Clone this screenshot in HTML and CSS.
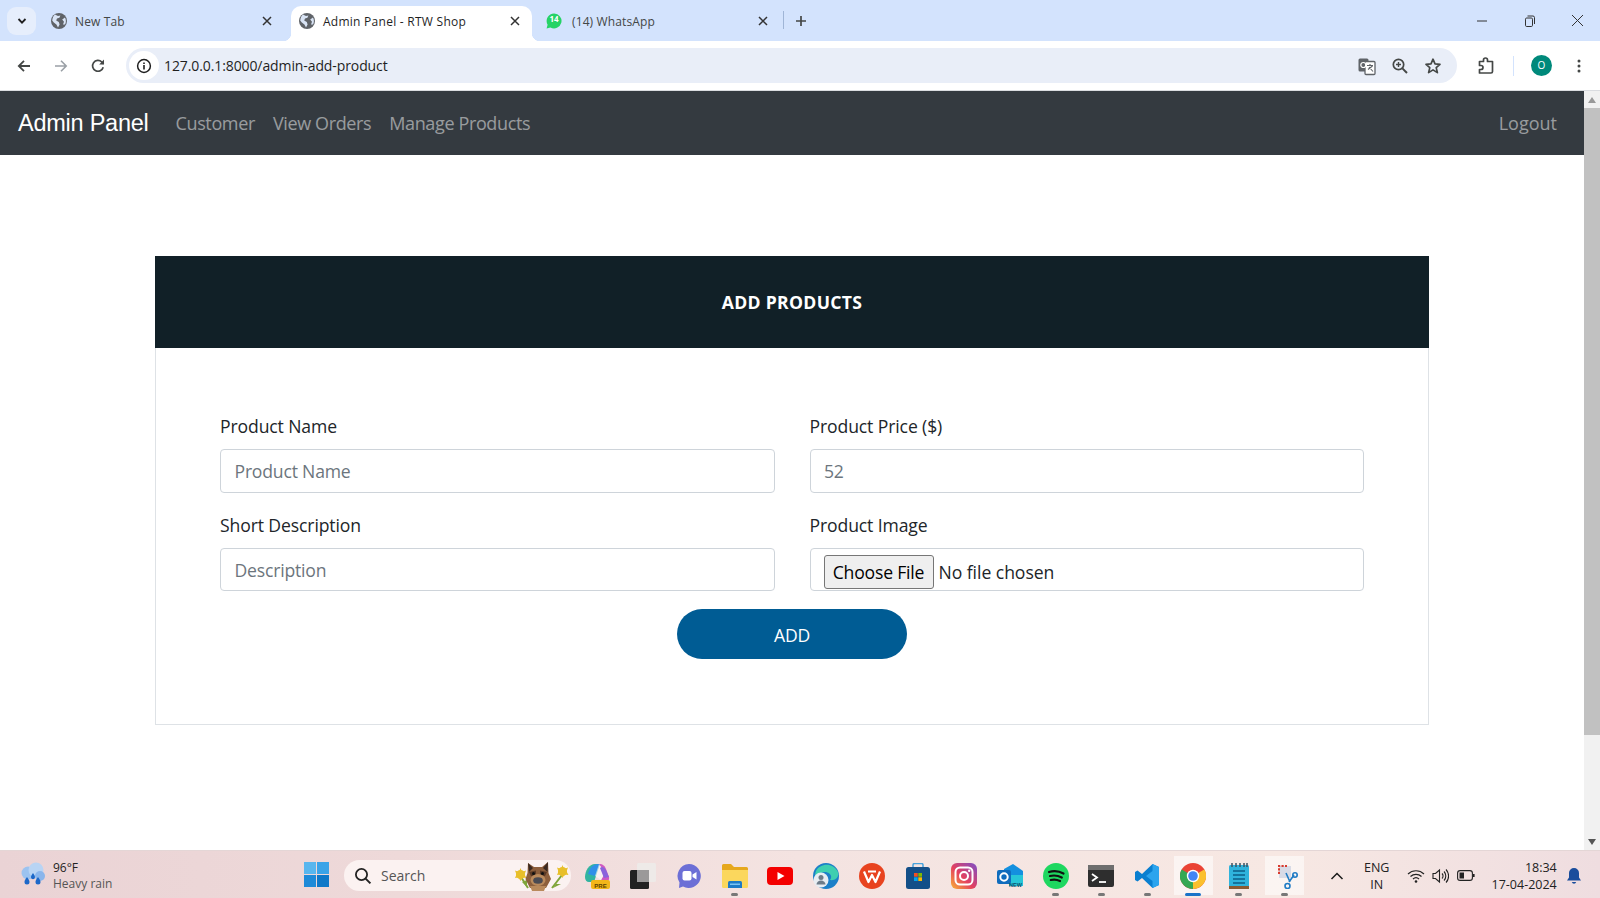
FILE: index.html
```html
<!DOCTYPE html>
<html lang="en">
<head>
<meta charset="utf-8">
<title>Admin Panel - RTW Shop</title>
<link rel="stylesheet" href="styles.css">
</head>
<body>
<svg class="sprite" aria-hidden="true">
  <symbol id="globe" viewBox="0 0 16 16"><circle cx="8" cy="8" r="8" fill="#5f6368"/><path d="M4 1.6 7 3 9.4 2.6 8.4 4.8 6 5.6 5.2 7.6 7.8 9 8.6 11.4 7 14.6 5.4 11.6 2.8 9.4 1.2 7.4C1.6 4.8 2.6 2.8 4 1.6ZM14 4.4 11.2 6.6 13 8.8 12 11.4 14 11.6C15.2 9.4 15.2 6.6 14 4.4Z" fill="#d9e4f5"/></symbol>
  <symbol id="close" viewBox="0 0 12 12"><path d="M2 2 10 10M10 2 2 10" stroke="currentColor" stroke-width="1.5" fill="none"/></symbol>
</svg>
<div class="app">
  <header class="tabstrip">
    <button class="tab-menu" aria-label="Search tabs"><svg width="12" height="12" viewBox="0 0 12 12"><path d="M2.5 4 6 7.6 9.5 4" stroke="#1f1f1f" stroke-width="1.8" fill="none"/></svg></button>
    <div class="tab tab-first">
      <svg class="tab-icon" width="16" height="16"><use href="#globe"/></svg>
      <span class="tab-title">New Tab</span>
      <svg class="tab-close" width="12" height="12"><use href="#close"/></svg>
    </div>
    <div class="tab tab-active">
      <svg class="tab-icon" width="16" height="16"><use href="#globe"/></svg>
      <span class="tab-title">Admin Panel - RTW Shop</span>
      <svg class="tab-close" width="12" height="12"><use href="#close"/></svg>
    </div>
    <div class="tab tab-last">
      <svg class="tab-icon" width="16" height="16" viewBox="0 0 16 16"><path d="M8 .6A7.4 7.4 0 0 0 1.6 11.7L.6 15.4 4.4 14.4A7.4 7.4 0 1 0 8 .6Z" fill="#25d366"/></svg>
      <span class="tab-badge">14</span>
      <span class="tab-title">(14) WhatsApp</span>
      <svg class="tab-close" width="12" height="12"><use href="#close"/></svg>
    </div>
    <span class="tab-sep"></span>
    <svg class="tab-new" width="14" height="14" viewBox="0 0 14 14"><path d="M7 2V12M2 7H12" stroke="#444746" stroke-width="1.7"/></svg>
    <div class="win-controls">
      <svg width="12" height="12" viewBox="0 0 12 12"><path d="M1 6H11" stroke="#333" stroke-width="1"/></svg>
      <svg width="12" height="12" viewBox="0 0 12 12"><rect x="1.5" y="3" width="7" height="8.5" rx="1.2" fill="none" stroke="#333"/><path d="M3.5 1H9A1.6 1.6 0 0 1 10.5 2.6V9" fill="none" stroke="#333"/></svg>
      <svg width="13" height="13" viewBox="0 0 13 13"><path d="M1 1 12 12M12 1 1 12" stroke="#333" stroke-width="1"/></svg>
    </div>
  </header>

  <div class="toolbar">
    <button class="nav-btn" aria-label="Back"><svg width="16" height="16" viewBox="0 0 16 16"><path d="M14 8H3M8 2.8 2.8 8 8 13.2" stroke="#444746" stroke-width="1.8" fill="none"/></svg></button>
    <button class="nav-btn" aria-label="Forward"><svg width="16" height="16" viewBox="0 0 16 16"><path d="M2 8H13M8 2.8 13.2 8 8 13.2" stroke="#9aa0a6" stroke-width="1.6" fill="none"/></svg></button>
    <button class="nav-btn" aria-label="Reload"><svg width="16" height="16" viewBox="0 0 16 16"><path d="M13.2 9.2A5.4 5.4 0 1 1 11.8 4L13.6 5.8" stroke="#444746" stroke-width="1.7" fill="none"/><path d="M14 1.6V6.4H9.2Z" fill="#444746"/></svg></button>
    <div class="omnibox">
      <span class="site-info"><svg width="16" height="16" viewBox="0 0 16 16"><circle cx="8" cy="8" r="6.4" fill="none" stroke="#1f1f1f" stroke-width="1.5"/><path d="M8 7V11.4M8 4.4V6" stroke="#1f1f1f" stroke-width="1.6"/></svg></span>
      <span class="url">127.0.0.1:8000/admin-add-product</span>
      <span class="omni-action"><svg width="20" height="20" viewBox="0 0 20 20"><rect x="1.5" y="2.5" width="10" height="13" rx="1.5" fill="#5f6368"/><rect x="8" y="5.5" width="10" height="13" rx="1" fill="#fff" stroke="#5f6368" stroke-width="1.3"/><path d="M10 9.5H16M13 8V10M11 13.5 15.5 10M12 11 16 15.5" stroke="#5f6368" stroke-width="1.1" fill="none"/><circle cx="6.3" cy="9" r="2.5" fill="none" stroke="#fff" stroke-width="1.2"/></svg></span>
      <span class="omni-action"><svg width="18" height="18" viewBox="0 0 18 18"><circle cx="7.5" cy="7.5" r="5.2" fill="none" stroke="#444746" stroke-width="1.7"/><path d="M11.4 11.4 16 16" stroke="#444746" stroke-width="2"/><path d="M7.5 5V10M5 7.5H10" stroke="#444746" stroke-width="1.4"/></svg></span>
      <span class="omni-action"><svg width="18" height="18" viewBox="0 0 18 18"><path d="M9 2.2 11 6.9 16 7.3 12.2 10.6 13.4 15.6 9 12.9 4.6 15.6 5.8 10.6 2 7.3 7 6.9Z" fill="none" stroke="#444746" stroke-width="1.7" stroke-linejoin="round"/></svg></span>
    </div>
    <div class="toolbar-right">
      <span class="ext"><svg width="20" height="20" viewBox="0 0 20 20"><path d="M3.5 5.5H7.5V4A2 2 0 0 1 11.5 4V5.5H16.5V15.5A1.5 1.5 0 0 1 15 17H3.5V13.5H5A2 2 0 0 0 5 9.5H3.5Z" fill="none" stroke="#444746" stroke-width="1.7" stroke-linejoin="round"/></svg></span>
      <span class="toolbar-sep"></span>
      <span class="avatar">O</span>
      <span class="dots"><svg width="16" height="16" viewBox="0 0 16 16"><circle cx="8" cy="3" r="1.5" fill="#444746"/><circle cx="8" cy="8" r="1.5" fill="#444746"/><circle cx="8" cy="13" r="1.5" fill="#444746"/></svg></span>
    </div>
  </div>

  <div class="viewport">
    <main class="page">
      <nav class="navbar">
        <a class="brand">Admin Panel</a>
        <a class="nav-link">Customer</a>
        <a class="nav-link">View Orders</a>
        <a class="nav-link">Manage Products</a>
        <a class="nav-link nav-logout">Logout</a>
      </nav>
      <section class="card">
        <h1 class="card-head">ADD PRODUCTS</h1>
        <form class="card-body">
          <div class="form-grid">
            <div class="field">
              <label class="field-label">Product Name</label>
              <input class="field-input" type="text" placeholder="Product Name">
            </div>
            <div class="field">
              <label class="field-label">Product Price ($)</label>
              <input class="field-input" type="text" placeholder="52">
            </div>
            <div class="field">
              <label class="field-label">Short Description</label>
              <input class="field-input field-short" type="text" placeholder="Description">
            </div>
            <div class="field">
              <label class="field-label">Product Image</label>
              <input class="field-input field-short field-file" type="file">
            </div>
          </div>
          <button class="add-btn" type="button">ADD</button>
        </form>
      </section>
    </main>
    <aside class="scrollbar">
      <span class="sb-btn"><svg width="8" height="6" viewBox="0 0 8 6"><path d="M4 0 8 6H0Z" fill="#999"/></svg></span>
      <span class="sb-thumb"></span>
      <span class="sb-btn sb-down"><svg width="8" height="6" viewBox="0 0 8 6"><path d="M4 6 8 0H0Z" fill="#555"/></svg></span>
    </aside>
  </div>

  <footer class="taskbar">
    <div class="weather">
      <svg width="27" height="26" viewBox="0 0 27 26"><circle cx="9" cy="11" r="6.5" fill="#9cc3f0"/><circle cx="17" cy="8" r="7.5" fill="#b8d4f4"/><circle cx="21" cy="14" r="5" fill="#8ab6ec"/><path d="M8 15C9.5 17 10.5 18.5 10.5 20A2.5 2.5 0 0 1 5.5 20C5.5 18.5 6.5 17 8 15ZM14 11C15.2 12.8 16 14 16 15.2A2 2 0 0 1 12 15.2C12 14 12.8 12.8 14 11ZM19 15C20.5 17 21.5 18.5 21.5 20A2.5 2.5 0 0 1 16.5 20C16.5 18.5 17.5 17 19 15Z" fill="#1c68c9"/></svg>
      <div class="weather-text"><span class="weather-temp">96°F</span><span class="weather-desc">Heavy rain</span></div>
    </div>
    <svg class="win-logo" width="25" height="25" viewBox="0 0 25 25"><rect width="12" height="12" fill="#58b6ee"/><rect x="13" width="12" height="12" fill="#3aa3e8"/><rect y="13" width="12" height="12" fill="#1e8ad8"/><rect x="13" y="13" width="12" height="12" fill="#0f78c8"/></svg>
    <div class="search">
      <svg width="18" height="18" viewBox="0 0 18 18"><circle cx="7.5" cy="7.5" r="5.6" fill="none" stroke="#222" stroke-width="1.8"/><path d="M11.6 11.6 16.4 16.4" stroke="#222" stroke-width="2"/></svg>
      <span class="search-text">Search</span>
      <svg class="search-art" width="56" height="31" viewBox="0 0 56 31"><path d="M6 17 13 28M47 15 37 28" stroke="#7fa53a" stroke-width="2" fill="none"/><path d="M7 22 12 20 12 27ZM41 24 46 24 38 28Z" fill="#7fa53a"/><g fill="#e8bf2a"><circle cx="5.500" cy="14.500" r="4.500"/><circle cx="47.500" cy="11.500" r="4.500"/></g><path d="M5.500 8 7 12 11 10.500 9.500 14.500 11.500 18 7.500 17.500 5.500 21 3.500 17.500 0 18 1.500 14.500 0 10.500 4 12ZM47.500 5 49 9 53 7.500 51.500 11.500 53.500 15 49.500 14.500 47.500 18 45.500 14.500 42 15 43.500 11.500 42 7.500 46 9Z" fill="#e8bf2a"/><path d="M13 3 19 7H27L33 2 33.500 13 36 19 31 28H15L10.500 19 12.500 13Z" fill="#8d5f3c"/><path d="M13 3 18 8 14 12ZM33 2 28 8 32.500 12Z" fill="#3a2a22"/><path d="M14 12 21 10.500 21 16 16 16ZM25 10.500 32 12 30 16 25 16Z" fill="#5b3a25"/><ellipse cx="23" cy="20" rx="7.500" ry="6" fill="#b98a5c"/><ellipse cx="23" cy="20.500" rx="4.800" ry="3.300" fill="#4a4a52"/><circle cx="18.500" cy="13.500" r="1.500" fill="#111"/><circle cx="27.500" cy="13.500" r="1.500" fill="#111"/><path d="M15 26H31L29 31H17Z" fill="#b98a5c"/></svg>
    </div>
    <div class="apps">
      <div class="app-slot">
        <svg class="app-icon" viewBox="0 0 26 26"><path d="M1 14C1 8 5 1 11 1H16L10 19H5C2.500 19 1 17 1 14Z" fill="#31b4a0"/><path d="M6 6C8 2 12 1 16 1L11 13 4 11Z" fill="#2f8fe8"/><path d="M15 1C19 1 21 3 22 6L25 14C25.500 17 24 19 21 19H16L21 10Z" fill="#d05ac0"/><path d="M15 1 21 10 17 17 11 13Z" fill="#fff" opacity=".55"/><path d="M16 5C18 3 20 4 22 7L25 14 20 15Z" fill="#8a63dc"/><rect x="7" y="17" width="19" height="9" rx="2" fill="#f2b619"/><text class="pre-label" x="16.500" y="24.500" text-anchor="middle">PRE</text></svg>
        <span class="app-dot app-dot-none"></span>
      </div>
      <div class="app-slot">
        <svg class="app-icon" viewBox="0 0 26 26"><rect x="7" y="0" width="19" height="19" rx="1.500" fill="#eeeae8"/><rect x="0" y="7" width="19" height="19" rx="1.500" fill="#222"/><rect x="7" y="7" width="12" height="12" fill="#9b9999"/></svg>
        <span class="app-dot app-dot-none"></span>
      </div>
      <div class="app-slot">
        <svg class="app-icon" viewBox="0 0 26 26"><path d="M13 1A12 12 0 1 1 7 23.500L3 25 3.500 19.500A12 12 0 0 1 13 1Z" fill="#6c6fd6"/><rect x="6.500" y="8" width="9" height="9.500" rx="2" fill="#fff"/><path d="M16.500 11.500 20.500 9V16.500L16.500 14Z" fill="#fff"/></svg>
        <span class="app-dot app-dot-none"></span>
      </div>
      <div class="app-slot">
        <svg class="app-icon" viewBox="0 0 26 26"><path d="M0 2.500A1.500 1.500 0 0 1 1.500 1H9L12 4H24.500A1.500 1.500 0 0 1 26 5.500V12H0Z" fill="#e6a81d"/><path d="M0 7H26V23.500A1.500 1.500 0 0 1 24.500 25H1.500A1.500 1.500 0 0 1 0 23.500Z" fill="#fbd75d"/><path d="M6 19.500A1.500 1.500 0 0 1 7.500 18H18.500A1.500 1.500 0 0 1 20 19.500V25H6Z" fill="#1e7ac6"/><rect x="8" y="20.500" width="10" height="1.500" fill="#7cc3f3"/></svg>
        <span class="app-dot"></span>
      </div>
      <div class="app-slot">
        <svg class="app-icon" viewBox="0 0 26 26"><rect y="4" width="26" height="18" rx="4" fill="#f40000"/><path d="M10.500 9 17.500 13 10.500 17Z" fill="#fff"/></svg>
        <span class="app-dot app-dot-none"></span>
      </div>
      <div class="app-slot">
        <svg class="app-icon" viewBox="0 0 26 26"><circle cx="13" cy="13" r="13" fill="#1c7fc8"/><path d="M3 8C7 0 20-1 25 9 26.500 14 22 18 17 17 21 12 14 7 8 10 5 11.500 3 14 2.500 16 2 13 2 10 3 8Z" fill="#3fcfb0"/><circle cx="8" cy="17" r="7.500" fill="#e8edf2"/><circle cx="8" cy="14.500" r="2.500" fill="#6d7b88"/><path d="M3.500 21.500A4.500 4 0 0 1 12.500 21.500Z" fill="#6d7b88"/></svg>
        <span class="app-dot app-dot-none"></span>
      </div>
      <div class="app-slot">
        <svg class="app-icon" viewBox="0 0 26 26"><circle cx="13" cy="13" r="13" fill="#e8431f"/><path d="M5 8.500 9.500 19 13 12 16.500 19 21 8.500M9 8.500H17" fill="none" stroke="#fff" stroke-width="2.200" stroke-linejoin="round"/></svg>
        <span class="app-dot app-dot-none"></span>
      </div>
      <div class="app-slot">
        <svg class="app-icon" viewBox="0 0 26 26"><path d="M8 5V2A1.500 1.500 0 0 1 9.500 .5H16.500A1.500 1.500 0 0 1 18 2V5" fill="none" stroke="#47a2dc" stroke-width="1.500"/><rect x="1" y="4" width="24" height="22" rx="2.500" fill="#134f88"/><rect x="9" y="10" width="3.700" height="3.700" fill="#f25022"/><rect x="13.300" y="10" width="3.700" height="3.700" fill="#7fba00"/><rect x="9" y="14.300" width="3.700" height="3.700" fill="#00a4ef"/><rect x="13.300" y="14.300" width="3.700" height="3.700" fill="#ffb900"/></svg>
        <span class="app-dot app-dot-none"></span>
      </div>
      <div class="app-slot">
        <svg class="app-icon" viewBox="0 0 26 26"><defs><linearGradient id="ig" x1="0" y1="1" x2="1" y2="0"><stop offset="0" stop-color="#f9b233"/><stop offset=".45" stop-color="#e4405f"/><stop offset="1" stop-color="#7b4fc9"/></linearGradient></defs><rect width="26" height="26" rx="6" fill="url(#ig)"/><rect x="4.500" y="4.500" width="17" height="17" rx="4.500" fill="none" stroke="#fff" stroke-width="2"/><circle cx="13" cy="13" r="4" fill="none" stroke="#fff" stroke-width="2"/><circle cx="18.200" cy="7.800" r="1.200" fill="#fff"/></svg>
        <span class="app-dot app-dot-none"></span>
      </div>
      <div class="app-slot">
        <svg class="app-icon" viewBox="0 0 26 26"><path d="M7 6 16 1 26 8V14H7Z" fill="#1490df"/><path d="M12 12H26V23H12Z" fill="#27c6d8"/><rect y="7" width="14" height="14" rx="2" fill="#0f6cbd"/><circle cx="7" cy="14" r="3.700" fill="none" stroke="#fff" stroke-width="2"/><text class="new-label" x="18.500" y="23.500" text-anchor="middle">NEW</text></svg>
        <span class="app-dot app-dot-none"></span>
      </div>
      <div class="app-slot">
        <svg class="app-icon" viewBox="0 0 26 26"><circle cx="13" cy="13" r="13" fill="#1ed760"/><path d="M6 9C11 7.500 16 8 20.500 10.500M7 13C11 12 15 12.500 18.800 14.500M7.800 17C11 16.200 14 16.500 17 18" stroke="#111" stroke-width="2.200" fill="none" stroke-linecap="round"/></svg>
        <span class="app-dot"></span>
      </div>
      <div class="app-slot">
        <svg class="app-icon" viewBox="0 0 26 26"><rect y="2" width="26" height="22" rx="2" fill="#2e2e2e"/><rect y="2" width="26" height="5" fill="#6e6e6e"/><path d="M4 11 9 14.500 4 18" stroke="#fff" stroke-width="1.800" fill="none"/><path d="M11 19H18" stroke="#fff" stroke-width="1.800"/></svg>
        <span class="app-dot"></span>
      </div>
      <div class="app-slot">
        <svg class="app-icon" viewBox="0 0 26 26"><path d="M18.500 1 25 4V22L18.500 25 8 15 3.500 18.500 1 17V9L3.500 7.500 8 11Z" fill="#0a7fd0"/><path d="M18.500 1 25 4V22L18.500 25V18L12 13 18.500 8Z" fill="#2ba4ee"/></svg>
        <span class="app-dot"></span>
      </div>
      <div class="app-slot app-slot-open">
        <svg class="app-icon" viewBox="0 0 26 26"><circle cx="13" cy="13" r="13" fill="#ea4335"/><path d="M13 13 24.300 6.500A13 13 0 0 1 13 26Z" fill="#fbc02d"/><path d="M13 13 13 26A13 13 0 0 1 1.700 6.500Z" fill="#34a853"/><circle cx="13" cy="13" r="6.200" fill="#fff"/><circle cx="13" cy="13" r="4.800" fill="#4285f4"/></svg>
        <span class="app-dot app-dot-active"></span>
      </div>
      <div class="app-slot">
        <svg class="app-icon" viewBox="0 0 26 26"><rect x="3" y="2" width="20" height="22" rx="1.500" fill="#2fb3dc"/><rect x="3" y="23" width="20" height="3" fill="#8a5a33"/><path d="M7 8H19M7 12H19M7 16H19M7 20H19" stroke="#0d5f86" stroke-width="1.500"/><path d="M6 0V4M10 0V4M14 0V4M18 0V4M21 0V4" stroke="#3c5161" stroke-width="1.500"/></svg>
        <span class="app-dot"></span>
      </div>
      <div class="app-slot app-slot-open">
        <svg class="app-icon" viewBox="0 0 26 26"><rect x="7" y="3" width="12" height="12" fill="#d8dbe6"/><path d="M7 11V3H15" fill="none" stroke="#d83b2f" stroke-width="2" stroke-dasharray="2.200 1.300"/><path d="M14 10 18 19M22 12 17 19" stroke="#1f7bc4" stroke-width="1.600"/><circle cx="15.500" cy="23" r="2.500" fill="none" stroke="#1f7bc4" stroke-width="1.600"/><circle cx="23" cy="12" r="2.200" fill="none" stroke="#1f7bc4" stroke-width="1.600"/></svg>
        <span class="app-dot"></span>
      </div>
    </div>
    <div class="tray">
      <svg class="tray-chevron" width="14" height="10" viewBox="0 0 14 10"><path d="M1.500 8 7 2.500 12.500 8" stroke="#1b1b1b" stroke-width="1.500" fill="none"/></svg>
      <div class="tray-lang"><span>ENG</span><span>IN</span></div>
      <svg class="tray-wifi" width="18" height="16" viewBox="0 0 18 16"><path d="M1 6A11.500 11.500 0 0 1 17 6M3.500 8.500A8 8 0 0 1 14.500 8.500M6 11A4.400 4.400 0 0 1 12 11" stroke="#222" stroke-width="1.200" fill="none"/><circle cx="9" cy="13.500" r="1.300" fill="#222"/></svg>
      <svg class="tray-sound" width="17" height="16" viewBox="0 0 17 16"><path d="M1 5.500H3.500L7.500 2V14L3.500 10.500H1Z" fill="none" stroke="#222" stroke-width="1.100"/><path d="M10 5.500A3.500 3.500 0 0 1 10 10.500M12 3.500A6.500 6.500 0 0 1 12 12.500M14 1.500A9.500 9.500 0 0 1 14 14.500" stroke="#222" stroke-width="1.100" fill="none"/></svg>
      <svg class="tray-battery" width="18" height="11" viewBox="0 0 18 11"><rect x=".6" y=".6" width="14.800" height="9.800" rx="2.500" fill="none" stroke="#222" stroke-width="1.100"/><rect x="2.500" y="2.500" width="4.500" height="6" fill="#222"/><rect x="16" y="4" width="1.600" height="3" fill="#222"/></svg>
      <div class="tray-clock"><span>18:34</span><span>17-04-2024</span></div>
      <svg class="tray-bell" width="16" height="18" viewBox="0 0 16 18"><path d="M8 1A5 5 0 0 0 3 6V10.500L1 13.500H15L13 10.500V6A5 5 0 0 0 8 1Z" fill="#1a4d9c"/><path d="M5.800 15A2.300 2.300 0 0 0 10.200 15Z" fill="#1a4d9c"/></svg>
    </div>
  </footer>
</div>
</body>
</html>
```
FILE: styles.css
```css
* { box-sizing: border-box; }
html, body { margin: 0; height: 100%; overflow: hidden; }
body { font-family: "Open Sans", "Noto Sans", "Liberation Sans", sans-serif; color: #212529; background: #fff; }
.sprite { display: none; }
.app { display: flex; flex-direction: column; width: 1600px; height: 898px; }

/* browser tabs */
.tabstrip { height: 41px; background: #d3e3fd; display: flex; align-items: flex-end; padding-left: 7px; flex: none; color: #444746; font-size: 12px; }
.tab-menu { width: 29px; height: 28px; margin-bottom: 6px; border: 0; border-radius: 9px; background: #e6eefc; display: flex; align-items: center; justify-content: center; padding: 0; }
.tab { position: relative; height: 35px; display: flex; align-items: center; padding-bottom: 5px; }
.tab-first { width: 255px; padding-left: 15px; padding-right: 18px; }
.tab-active { width: 241px; padding-left: 8px; padding-right: 11px; background: #fff; border-radius: 10px 10px 0 0; color: #1f1f1f; }
.tab-active::before, .tab-active::after { content: ""; position: absolute; bottom: 0; width: 8px; height: 8px; }
.tab-active::before { left: -8px; background: radial-gradient(circle at 0 0, #d3e3fd 8px, #fff 8.5px); }
.tab-active::after { right: -8px; background: radial-gradient(circle at 100% 0, #d3e3fd 8px, #fff 8.5px); }
.tab-last { width: 243px; padding-left: 14px; padding-right: 6px; }
.tab-icon { flex: none; margin-right: 8px; }
.tab-last .tab-icon { margin-right: 10px; }
.tab-title { flex: 1; white-space: nowrap; letter-spacing: .12px; }
.tab-active .tab-title { letter-spacing: .26px; }
.tab-close { flex: none; color: #333; }
.tab-badge { position: absolute; left: 14px; top: 5px; width: 16px; text-align: center; font-size: 8px; font-weight: 700; line-height: 15px; color: #fff; }
.tab-sep { width: 1px; height: 18px; background: #9fb5d6; margin: 0 0 12px 8px; }
.tab-new { margin: 0 0 13px 10px; }
.win-controls { margin-left: auto; height: 41px; width: 124px; padding: 0 16px 0 0; display: flex; align-items: center; justify-content: space-between; }

/* browser toolbar */
.toolbar { height: 49px; background: #fff; border-radius: 8px 8px 0 0; margin-top: 0; padding: 7px 0 7px 5px; display: flex; align-items: center; flex: none; }
.nav-btn { width: 37px; height: 35px; border: 0; padding: 0; background: none; display: flex; align-items: center; justify-content: center; }
.omnibox { flex: 1; height: 35px; margin-left: 10px; background: #e9eef8; border-radius: 18px; display: flex; align-items: center; padding: 0 8px 0 3px; }
.site-info { width: 30px; height: 29px; border-radius: 15px; background: #fff; display: flex; align-items: center; justify-content: center; flex: none; }
.url { flex: 1; margin-left: 5px; font-size: 14px; color: #1f1f1f; letter-spacing: -.1px; white-space: nowrap; }
.omni-action { width: 33px; display: flex; align-items: center; justify-content: center; }
.toolbar-right { width: 143px; flex: none; display: flex; align-items: center; padding-left: 12px; }
.ext { width: 34px; display: flex; justify-content: center; }
.toolbar-sep { width: 1px; height: 20px; background: #d3e3fd; margin-left: 10px; }
.avatar { width: 21px; height: 21px; margin-left: 17px; border-radius: 50%; background: #00897b; color: #fff; font-size: 10px; line-height: 21px; text-align: center; }
.dots { width: 16px; margin-left: 19px; display: flex; }

/* page */
.viewport { flex: 1; display: flex; min-height: 0; border-top: 1px solid #dadce0; }
.page { flex: 1; min-width: 0; }
.scrollbar { width: 16px; flex: none; background: #f1f1f1; display: flex; flex-direction: column; }
.sb-btn { height: 17px; display: flex; align-items: center; justify-content: center; flex: none; }
.sb-thumb { height: 627px; background: #c1c1c1; flex: none; }
.sb-down { margin-top: auto; }

.navbar { height: 64px; background: #343a40; display: flex; align-items: center; padding: 0 27px 0 18px; }
.brand { font-family: "Liberation Sans", Arial, sans-serif; font-size: 23.5px; color: #fff; margin-right: 18px; letter-spacing: -.25px; }
.nav-link { font-size: 18px; color: rgba(255, 255, 255, .5); padding: 0 9px; letter-spacing: -.37px; }
.nav-logout { margin-left: auto; padding: 0; letter-spacing: 0; }

.card { width: 1274px; margin: 101px auto 0; }
.card-head { height: 92px; margin: 0; background: #112027; color: #fff; display: flex; align-items: center; justify-content: center; font-size: 17.600px; font-weight: 700; letter-spacing: .3px; }
.card-body { border: 1px solid #dee2e6; border-top: 0; padding: 65px 64px 65px; display: flex; flex-direction: column; align-items: center; }
.form-grid { width: 100%; display: grid; grid-template-columns: 1fr 1fr; column-gap: 35px; row-gap: 19px; }
.field { display: flex; flex-direction: column; }
.field-label { font-size: 17.600px; line-height: 26px; margin-bottom: 10px; letter-spacing: -.12px; color: #212529; }
.field-input { width: 100%; height: 44px; border: 1px solid #ced4da; border-radius: 4px; padding: 0 14px 0 13.500px; font: inherit; font-size: 17.600px; color: #495057; background: #fff; letter-spacing: -.2px; }
.field-input::placeholder { color: #6c757d; opacity: 1; }
.field-short { height: 43px; }
.field-file { padding: 6px 14px 0 13px; color: #212529; letter-spacing: -.05px; }
.field-file::file-selector-button { height: 34px; width: 110px; padding: 0; margin-right: 5px; font: inherit; letter-spacing: -.2px; color: #000; background: #efefef; border: 1px solid #767676; border-radius: 3px; }
.add-btn { width: 230px; height: 50px; margin-top: 18px; padding: 2px 0 0; border: 0; border-radius: 25px; background: #005c94; color: #fff; font: inherit; font-size: 17.600px; letter-spacing: -.2px; }

/* taskbar */
.taskbar { height: 48px; flex: none; display: flex; align-items: center; border-top: 1px solid #e4d6d6; background: linear-gradient(90deg, #ead3d5 0, #eed9d9 25%, #f4e3e1 50%, #f7e8e3 80%, #efdde0 100%); font-size: 12px; color: #222; }
.weather { width: 304px; flex: none; display: flex; align-items: center; padding-left: 19px; gap: 7px; }
.weather-text { display: flex; flex-direction: column; line-height: 16px; padding-top: 2px; }
.weather-desc { color: #555; }
.win-logo { flex: none; }
.search { width: 227px; height: 31px; margin: 2px 0 0 15px; border-radius: 16px; background: #fbf2f1; display: flex; align-items: center; padding-left: 10px; flex: none; }
.search-text { margin-left: 9px; font-size: 14px; color: #555; }
.search-art { margin-left: auto; flex: none; }
.apps { display: flex; margin-left: 3px; flex: none; }
.app-slot { width: 45.870px; height: 47px; display: flex; flex-direction: column; align-items: center; padding-top: 12px; }
.app-slot-open { background: linear-gradient(rgba(255, 255, 255, 0) 5px, rgba(255, 255, 255, .55) 5px, rgba(255, 255, 255, .55) 44px, rgba(255, 255, 255, 0) 44px); background-size: 39px 100%; background-position: center; background-repeat: no-repeat; }
.app-icon { width: 26px; height: 26px; display: block; flex: none; }
.app-dot { width: 7px; height: 3px; margin-top: 4px; border-radius: 2px; background: #777; }
.app-dot-none { background: none; }
.app-dot-active { width: 16px; background: #1a73c8; }
.pre-label { font: 700 6px "Liberation Sans", sans-serif; fill: #5b4300; }
.new-label { font: 700 5.500px "Liberation Sans", sans-serif; fill: #0b4f6c; }
.tray { flex: 1; display: flex; align-items: center; padding-left: 22px; padding-top: 2px; font-size: 12.500px; }
.tray-lang { width: 40px; margin-left: 13px; display: flex; flex-direction: column; align-items: center; line-height: 17px; }
.tray-wifi { margin-left: 10px; }
.tray-sound { margin-left: 7px; }
.tray-battery { margin-left: 8px; }
.tray-clock { width: 82px; margin-left: 0; display: flex; flex-direction: column; align-items: flex-end; line-height: 17px; }
.tray-bell { margin-left: 9px; }
```
